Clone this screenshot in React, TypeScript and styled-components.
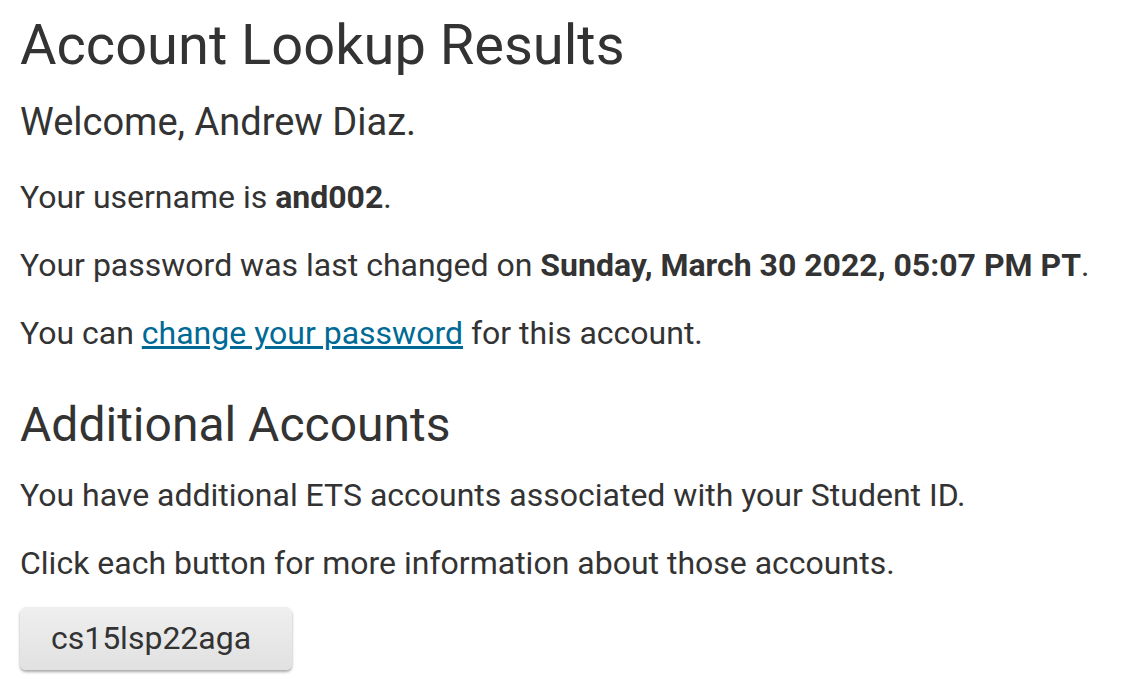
import React from "react";
import styled, { createGlobalStyle } from "styled-components";

const Global = createGlobalStyle`
  html, body { margin: 0; padding: 0; background: #fff; }
  body { font-family: Roboto, "Liberation Sans", sans-serif; color: #333; }
`;

const Page = styled.main`
  padding: 12px 20px 20px 20px;
  display: flex;
  flex-direction: column;
  align-items: flex-start;
`;

const Title = styled.h1`
  font-size: 56px;
  font-weight: 400;
  line-height: 1.2;
  margin: 0 0 22px;
`;

const Welcome = styled.h2`
  font-size: 38px;
  font-weight: 400;
  line-height: 42px;
  margin: 0 0 30px;
`;

const Section = styled.h3`
  font-size: 48px;
  font-weight: 400;
  line-height: 1.2;
  margin: 19px 0 17px;
`;

const Para = styled.p`
  font-size: 32px;
  line-height: 48px;
  margin: 0 0 20px;
`;

const Link = styled.a`
  color: #006a96;
  text-decoration: underline;
`;

const AccountButton = styled.button`
  font-family: Roboto, "Liberation Sans", sans-serif;
  font-size: 32px;
  color: #333;
  width: 272px;
  height: 63px;
  padding: 0 10px 0 0;
  border: none;
  border-radius: 6px;
  background: linear-gradient(#efefef, #e1e1e1);
  box-shadow: 0 2px 3px rgba(0, 0, 0, 0.35);
  cursor: pointer;
`;

export default function App() {
  return (
    <>
      <Global />
      <Page>
        <Title>Account Lookup Results</Title>
        <Welcome>Welcome, Andrew Diaz.</Welcome>
        <Para>
          Your username is <b>and002</b>.
        </Para>
        <Para>
          Your password was last changed on <b>Sunday, March 30 2022, 05:07 PM PT</b>.
        </Para>
        <Para>
          You can <Link href="#">change your password</Link> for this account.
        </Para>
        <Section>Additional Accounts</Section>
        <Para>You have additional ETS accounts associated with your Student ID.</Para>
        <Para>Click each button for more information about those accounts.</Para>
        <AccountButton>cs15lsp22aga</AccountButton>
      </Page>
    </>
  );
}
